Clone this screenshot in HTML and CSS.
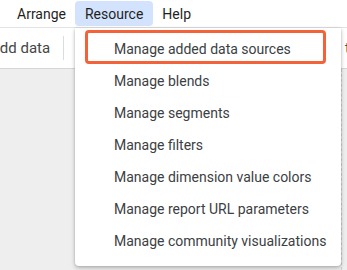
FILE: index.html
```html
<!DOCTYPE html>
<html>
<head>
<meta charset="utf-8">
<link rel="stylesheet" href="styles.css">
</head>
<body>
<div class="app">
  <div class="menubar">
    <span class="mb-item">Arrange</span>
    <span class="mb-item active">Resource</span>
    <span class="mb-item">Help</span>
  </div>
  <div class="toolbar">
    <span class="tb-add">Add data</span>
    <span class="tb-div"></span>
    <span class="tb-spacer"></span>
    <span class="tb-right">t</span>
  </div>
  <div class="canvas">
    <div class="canvas-right"></div>
  </div>
  <div class="menu">
    <div class="menu-item highlighted">Manage added data sources</div>
    <div class="menu-item">Manage blends</div>
    <div class="menu-item">Manage segments</div>
    <div class="menu-item">Manage filters</div>
    <div class="menu-item">Manage dimension value colors</div>
    <div class="menu-item">Manage report URL parameters</div>
    <div class="menu-item">Manage community visualizations</div>
  </div>
</div>
</body>
</html>
```
FILE: styles.css
```css
html, body {
  margin: 0;
  padding: 0;
  width: 347px;
  height: 270px;
  overflow: hidden;
  background: #fff;
  font-family: Roboto, "Liberation Sans", sans-serif;
}
.app {
  position: relative;
  width: 347px;
  height: 270px;
  display: flex;
  flex-direction: column;
}
.menubar {
  height: 26px;
  display: flex;
  align-items: flex-start;
  padding-left: 8px;
  padding-top: 1px;
  border-bottom: 1px solid #e3e3e3;
}
.mb-item {
  display: flex;
  align-items: center;
  padding: 0 9px;
  font-size: 14px;
  color: #1f1f1f;
  border-radius: 4px;
  height: 25px;
}
.mb-item.active {
  background: #d3e3fd;
  padding: 0 10px;
}
.toolbar {
  height: 40px;
  display: flex;
  align-items: center;
  border-bottom: 1px solid #d6d6d6;
}
.tb-add {
  font-size: 15px;
  color: #444746;
  margin-left: -10px;
}
.tb-div {
  width: 1px;
  height: 24px;
  background: #dadce0;
  margin-left: 13px;
}
.tb-spacer { flex: 1; }
.tb-right {
  font-size: 15px;
  color: #444746;
  margin-right: -3px;
}
.canvas {
  flex: 1;
  background: #eeeeee;
  position: relative;
}
.canvas-right {
  position: absolute;
  right: 0;
  top: 0;
  width: 5px;
  height: 100%;
  border-left: 1px dashed #d0d0d0;
}
.menu {
  position: absolute;
  left: 75px;
  top: 28px;
  width: 266px;
  height: 238px;
  background: #fff;
  border-radius: 0 0 4px 4px;
  box-shadow: 0 2px 4px rgba(0,0,0,0.25), 0 0 2px rgba(0,0,0,0.15);
  padding-top: 2px;
  box-sizing: border-box;
}
.menu-item {
  height: 32px;
  line-height: 32px;
  padding-left: 39px;
  font-size: 14px;
  color: #3c4043;
  box-sizing: border-box;
}
.menu-item.highlighted {
  margin: 0 15px 1px 10px;
  height: 34px;
  line-height: 28px;
  padding-top: 2px;
  padding-left: 26px;
  border: 3px solid #f4623a;
  border-radius: 4px;
}
```
